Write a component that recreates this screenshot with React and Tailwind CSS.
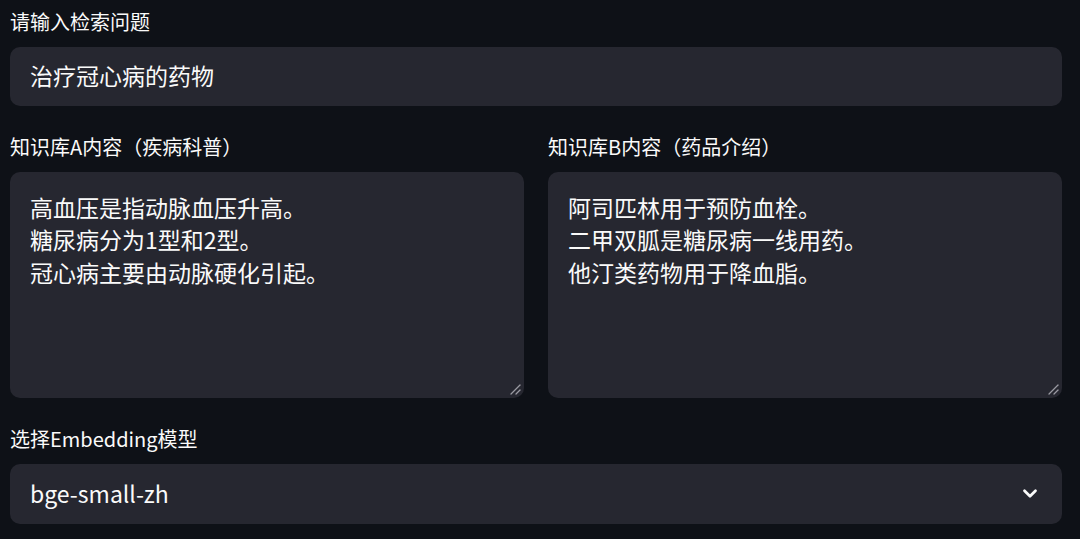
import React, { useState } from 'react'

const FONT = { fontFamily: '"Noto Sans CJK SC", "Noto Sans", sans-serif' }

function ResizeGrip() {
  return (
    <svg className="pointer-events-none absolute bottom-[3px] right-[3px]" width="12" height="12" viewBox="0 0 12 12">
      <line x1="2" y1="11" x2="11" y2="2" stroke="#9a9aa2" strokeWidth="1.3" strokeLinecap="round" />
      <line x1="7" y1="11" x2="11" y2="7" stroke="#9a9aa2" strokeWidth="1.3" strokeLinecap="round" />
    </svg>
  )
}

function Label({ children }) {
  return <label className="block text-[20px] leading-[28px] mb-[11px] text-[#fafafa]">{children}</label>
}

function KnowledgeBox({ label, value }) {
  return (
    <div className="flex-1 min-w-0">
      <Label>{label}</Label>
      <div className="relative">
        <textarea
          defaultValue={value}
          spellCheck={false}
          className="block w-full h-[226px] resize-none rounded-[10px] bg-[#262730] text-[#fafafa] text-[23px] leading-[32.4px] px-[20px] pt-[19px] outline-none"
          style={FONT}
        />
        <ResizeGrip />
      </div>
    </div>
  )
}

export default function App() {
  const [query, setQuery] = useState('治疗冠心病的药物')

  return (
    <div className="min-h-[539px] w-full bg-[#0e1117] pl-[10px] pr-[18px] pt-2" style={FONT}>
      {/* 检索问题 */}
      <Label>请输入检索问题</Label>
      <input
        value={query}
        onChange={e => setQuery(e.target.value)}
        className="block w-full h-[59px] rounded-[10px] bg-[#262730] text-[#fafafa] text-[23px] px-[20px] pb-[3px] outline-none"
        style={FONT}
      />

      {/* 两个知识库 */}
      <div className="flex gap-[24px] mt-[27px]">
        <KnowledgeBox
          label="知识库A内容（疾病科普）"
          value={'高血压是指动脉血压升高。\n糖尿病分为1型和2型。\n冠心病主要由动脉硬化引起。'}
        />
        <KnowledgeBox
          label="知识库B内容（药品介绍）"
          value={'阿司匹林用于预防血栓。\n二甲双胍是糖尿病一线用药。\n他汀类药物用于降血脂。'}
        />
      </div>

      {/* 模型选择 */}
      <div className="mt-[27px]">
        <Label>选择Embedding模型</Label>
        <div className="flex items-center justify-between h-[60px] rounded-[10px] bg-[#262730] pl-[20px] pr-[21px] pb-[2px] text-[#fafafa] text-[23px]">
          <span>bge-small-zh</span>
          <svg width="22" height="22" viewBox="0 0 24 24" fill="none" stroke="#fafafa" strokeWidth="3" strokeLinecap="round" strokeLinejoin="round">
            <path d="M6 9.5l6 6 6-6" />
          </svg>
        </div>
      </div>
    </div>
  )
}
